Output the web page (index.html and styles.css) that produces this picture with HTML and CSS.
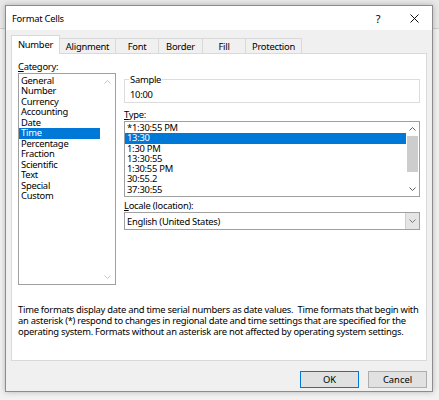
FILE: index.html
```html
<!DOCTYPE html>
<html lang="en">
<head>
<meta charset="utf-8">
<title>Format Cells</title>
<link rel="stylesheet" href="styles.css">
</head>
<body>
<div class="dialog">
  <div class="titlebar">
    <span class="title">Format Cells</span>
    <span class="tb-btn help">?</span>
    <span class="tb-btn close"><svg width="9" height="9" viewBox="0 0 9 9"><path d="M0.5 0.5L8.5 8.5M8.5 0.5L0.5 8.5" stroke="#111" stroke-width="1" fill="none"/></svg></span>
  </div>
  <div class="body">
    <div class="tabs">
      <div class="tab tab-number active">Number</div>
      <div class="tab tab-align">Alignment</div>
      <div class="tab tab-font">Font</div>
      <div class="tab tab-border">Border</div>
      <div class="tab tab-fill">Fill</div>
      <div class="tab tab-protect">Protection</div>
    </div>
    <div class="panel">
      <div class="columns">
        <div class="col-left">
          <div class="label"><u>C</u>ategory:</div>
          <div class="listbox cat-list">
            <ul class="items cat-items">
              <li>General</li>
              <li>Number</li>
              <li>Currency</li>
              <li>Accounting</li>
              <li>Date</li>
              <li class="selected">Time</li>
              <li>Percentage</li>
              <li>Fraction</li>
              <li>Scientific</li>
              <li>Text</li>
              <li>Special</li>
              <li>Custom</li>
            </ul>
            <div class="vscroll cat-scroll">
              <span class="arrow"><svg width="7" height="4" viewBox="0 0 7 4"><path d="M0.5 3.5L3.5 0.5L6.5 3.5" stroke="#c4c4c4" fill="none"/></svg></span>
              <span class="arrow"><svg width="7" height="4" viewBox="0 0 7 4"><path d="M0.5 0.5L3.5 3.5L6.5 0.5" stroke="#c4c4c4" fill="none"/></svg></span>
            </div>
          </div>
        </div>
        <div class="col-right">
          <fieldset class="sample">
            <legend>Sample</legend>
            <div class="sample-value">10:00</div>
          </fieldset>
          <div class="label type-label"><u>T</u>ype:</div>
          <div class="listbox type-list">
            <ul class="items type-items">
              <li>*1:30:55 PM</li>
              <li class="selected">13:30</li>
              <li>1:30 PM</li>
              <li>13:30:55</li>
              <li>1:30:55 PM</li>
              <li>30:55.2</li>
              <li>37:30:55</li>
            </ul>
            <div class="vscroll type-scroll">
              <span class="sb-btn"><svg width="7" height="4" viewBox="0 0 7 4"><path d="M0.5 3.5L3.5 0.5L6.5 3.5" stroke="#606060" fill="none"/></svg></span>
              <span class="thumb"></span>
              <span class="sb-btn"><svg width="7" height="4" viewBox="0 0 7 4"><path d="M0.5 0.5L3.5 3.5L6.5 0.5" stroke="#606060" fill="none"/></svg></span>
            </div>
          </div>
          <div class="label locale-label"><u>L</u>ocale (location):</div>
          <div class="combo">
            <span class="combo-text">English (United States)</span>
            <span class="combo-btn"><svg width="7" height="4" viewBox="0 0 7 4"><path d="M0.5 0.5L3.5 3.5L6.5 0.5" stroke="#7a7a7a" fill="none"/></svg></span>
          </div>
        </div>
      </div>
      <p class="desc">Time formats display date and time serial numbers as date values.&nbsp; Time formats that begin with<br>an asterisk (*) respond to changes in regional date and time settings that are specified for the<br>operating system. Formats without an asterisk are not affected by operating system settings.</p>
    </div>
    <div class="buttons">
      <button class="btn default">OK</button>
      <button class="btn">Cancel</button>
    </div>
  </div>
</div>
</body>
</html>
```
FILE: styles.css
```css
* { box-sizing: border-box; }
html, body { margin: 0; }
body {
  width: 439px;
  height: 400px;
  padding: 5px;
  overflow: hidden;
  background: linear-gradient(#e9e9e9 0 28px, #cfcfcf 28px 29px, #f2f2f2 29px);
  font-family: "Noto Sans", "Open Sans", sans-serif;
  font-size: 9.4px;
  letter-spacing: -0.25px;
  color: #000;
}
.dialog {
  width: 428px;
  height: 387px;
  border: 1px solid #8c8c8c;
  background: #f0f0f0;
  box-shadow: 0 0 6px rgba(0, 0, 0, 0.25);
  display: flex;
  flex-direction: column;
}
.titlebar {
  height: 24px;
  background: #fff;
  display: flex;
  align-items: center;
  padding-left: 6px;
}
.title { flex: 1; }
.tb-btn {
  height: 24px;
  display: flex;
  align-items: center;
  justify-content: center;
}
.help { width: 38px; font-size: 11px; }
.close { width: 35px; }
.body {
  flex: 1;
  padding: 5px 5px 0;
  display: flex;
  flex-direction: column;
}
.tabs {
  display: flex;
  align-items: flex-end;
  height: 19px;
  margin-bottom: -1px;
}
.tab {
  height: 16px;
  border: 1px solid #d9d9d9;
  border-bottom: 0;
  margin-left: -1px;
  display: flex;
  align-items: center;
  justify-content: center;
  background: #f0f0f0;
  white-space: nowrap;
}
.tab:first-child { margin-left: 0; }
.tab.active {
  height: 19px;
  background: #fff;
  position: relative;
  z-index: 1;
  padding-bottom: 2px;
}
.tab-number { width: 49px; }
.tab-align { width: 57px; }
.tab-font { width: 44px; }
.tab-border { width: 45px; }
.tab-fill { width: 44px; }
.tab-protect { width: 57px; }
.panel {
  height: 308px;
  border: 1px solid #d9d9d9;
  background: #fff;
  padding: 6px 6px 0;
}
.columns {
  display: grid;
  grid-template-columns: 98px 296px;
  column-gap: 8px;
  align-items: start;
}
.label { height: 13px; line-height: 13px; white-space: nowrap; }
.label u { text-underline-offset: 1px; }
.listbox {
  border: 1px solid #a0a0a0;
  display: flex;
  background: #fff;
}
.items {
  list-style: none;
  margin: 0;
  flex: 1;
  min-width: 0;
}
.items li { padding-left: 2px; white-space: nowrap; }
.items li.selected { background: #0078d7; color: #fff; }
.cat-list { height: 212px; }
.cat-items { padding: 1.5px 0 0; }
.cat-items li { height: 10.5px; line-height: 10.5px; }
.vscroll {
  display: flex;
  flex-direction: column;
  justify-content: space-between;
  align-items: center;
}
.cat-scroll { width: 15px; }
.arrow {
  width: 15px;
  height: 15px;
  display: flex;
  align-items: center;
  justify-content: center;
}
.sample {
  margin: 13px 0 0;
  padding: 0 4px 1px;
  border: 1px solid #dcdcdc;
  min-width: 0;
}
.sample legend { padding: 0 1px; line-height: 13px; }
.sample-value { line-height: 13px; margin-top: 2px; padding-left: 1px; }
.type-label { margin-top: 5px; }
.type-list { height: 76px; }
.type-items { padding: 1px 0 0; }
.type-items li { height: 10.3px; line-height: 10.3px; }
.type-scroll { width: 13px; justify-content: flex-start; }
.sb-btn {
  width: 13px;
  height: 14px;
  display: flex;
  align-items: center;
  justify-content: center;
}
.sb-btn:last-child { margin-top: auto; }
.thumb {
  width: 11px;
  height: 36px;
  background: #cdcdcd;
}
.locale-label { margin-top: 2px; }
.combo {
  height: 18px;
  border: 1px solid #a0a0a0;
  display: flex;
  align-items: center;
  padding-left: 2px;
}
.combo-text { flex: 1; }
.combo-btn {
  width: 14px;
  height: 16px;
  background: #e5e5e5;
  border-left: 1px solid #cfcfcf;
  display: flex;
  align-items: center;
  justify-content: center;
}
.desc {
  margin: 18.5px 0 0;
  line-height: 11px;
  white-space: nowrap;
}
.buttons {
  display: flex;
  justify-content: flex-end;
  gap: 9px;
  margin-top: 10px;
}
.btn {
  width: 59px;
  height: 17px;
  padding: 0;
  font: inherit;
  color: #000;
  border: 1px solid #adadad;
  background: #e1e1e1;
  line-height: 15px;
}
.btn.default { border-color: #0078d7; }
```
